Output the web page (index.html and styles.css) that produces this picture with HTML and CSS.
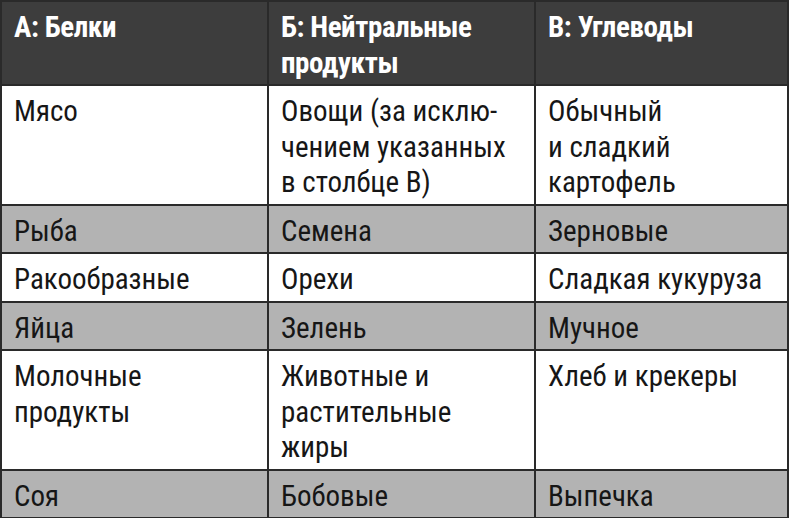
FILE: index.html
```html
<!DOCTYPE html>
<html lang="ru">
<head>
<meta charset="utf-8">
<link rel="stylesheet" href="styles.css">
</head>
<body>
<table class="food">
  <colgroup>
    <col class="c1">
    <col class="c2">
    <col class="c3">
  </colgroup>
  <thead>
    <tr>
      <th>А: Белки</th>
      <th>Б: Нейтральные<br>продукты</th>
      <th>В: Углеводы</th>
    </tr>
  </thead>
  <tbody>
    <tr>
      <td>Мясо</td>
      <td>Овощи (за исклю-<br>чением указанных<br>в столбце В)</td>
      <td>Обычный<br>и сладкий<br>картофель</td>
    </tr>
    <tr class="gray">
      <td>Рыба</td>
      <td>Семена</td>
      <td>Зерновые</td>
    </tr>
    <tr>
      <td>Ракообразные</td>
      <td>Орехи</td>
      <td>Сладкая кукуруза</td>
    </tr>
    <tr class="gray">
      <td>Яйца</td>
      <td>Зелень</td>
      <td>Мучное</td>
    </tr>
    <tr>
      <td>Молочные<br>продукты</td>
      <td>Животные и<br>растительные<br>жиры</td>
      <td>Хлеб и крекеры</td>
    </tr>
    <tr class="gray">
      <td>Соя</td>
      <td>Бобовые</td>
      <td>Выпечка</td>
    </tr>
  </tbody>
</table>
</body>
</html>
```
FILE: styles.css
```css
html, body {
  margin: 0;
  padding: 0;
  background: #ffffff;
}

.food {
  border-collapse: collapse;
  table-layout: fixed;
  width: 789px;
  font-family: "Roboto Condensed", "Liberation Sans", sans-serif;
  font-size: 29px;
  line-height: 35.5px;
  color: #161616;
}

.c1 { width: 267px; }
.c2 { width: 267px; }
.c3 { width: 253px; }

.food th,
.food td {
  border: 2px solid #2a2a2a;
  padding: 8px 12px 3px 12px;
  text-align: left;
  vertical-align: top;
  white-space: nowrap;
}

.food th {
  background: #3d3d3d;
  color: #ffffff;
  font-weight: 700;
  letter-spacing: -0.4px;
}

.food tr.gray td {
  background: #b3b3b3;
}
```
